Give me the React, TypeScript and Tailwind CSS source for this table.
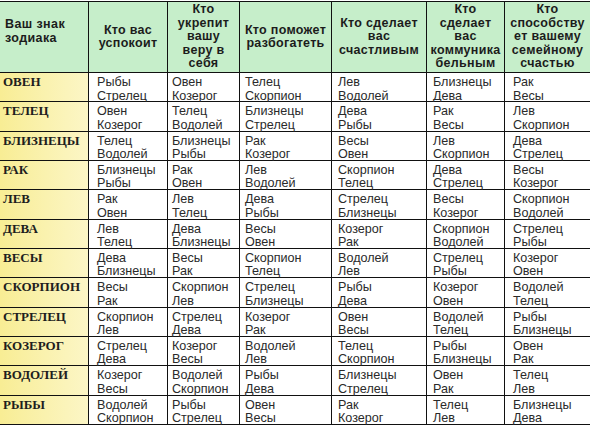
import React from 'react';

type Row = { sign: string; cells: [string, string][] };

const ROWS: Row[] = [
  { sign: 'ОВЕН', cells: [['Рыбы', 'Стрелец'], ['Овен', 'Козерог'], ['Телец', 'Скорпион'], ['Лев', 'Водолей'], ['Близнецы', 'Дева'], ['Рак', 'Весы']] },
  { sign: 'ТЕЛЕЦ', cells: [['Овен', 'Козерог'], ['Телец', 'Водолей'], ['Близнецы', 'Стрелец'], ['Дева', 'Рыбы'], ['Рак', 'Весы'], ['Лев', 'Скорпион']] },
  { sign: 'БЛИЗНЕЦЫ', cells: [['Телец', 'Водолей'], ['Близнецы', 'Рыбы'], ['Рак', 'Козерог'], ['Весы', 'Овен'], ['Лев', 'Скорпион'], ['Дева', 'Стрелец']] },
  { sign: 'РАК', cells: [['Близнецы', 'Рыбы'], ['Рак', 'Овен'], ['Лев', 'Водолей'], ['Скорпион', 'Телец'], ['Дева', 'Стрелец'], ['Весы', 'Козерог']] },
  { sign: 'ЛЕВ', cells: [['Рак', 'Овен'], ['Лев', 'Телец'], ['Дева', 'Рыбы'], ['Стрелец', 'Близнецы'], ['Весы', 'Козерог'], ['Скорпион', 'Водолей']] },
  { sign: 'ДЕВА', cells: [['Лев', 'Телец'], ['Дева', 'Близнецы'], ['Весы', 'Овен'], ['Козерог', 'Рак'], ['Скорпион', 'Водолей'], ['Стрелец', 'Рыбы']] },
  { sign: 'ВЕСЫ', cells: [['Дева', 'Близнецы'], ['Весы', 'Рак'], ['Скорпион', 'Телец'], ['Водолей', 'Лев'], ['Стрелец', 'Рыбы'], ['Козерог', 'Овен']] },
  { sign: 'СКОРПИОН', cells: [['Весы', 'Рак'], ['Скорпион', 'Лев'], ['Стрелец', 'Близнецы'], ['Рыбы', 'Дева'], ['Козерог', 'Овен'], ['Водолей', 'Телец']] },
  { sign: 'СТРЕЛЕЦ', cells: [['Скорпион', 'Лев'], ['Стрелец', 'Дева'], ['Козерог', 'Рак'], ['Овен', 'Весы'], ['Водолей', 'Телец'], ['Рыбы', 'Близнецы']] },
  { sign: 'КОЗЕРОГ', cells: [['Стрелец', 'Дева'], ['Козерог', 'Весы'], ['Водолей', 'Лев'], ['Телец', 'Скорпион'], ['Рыбы', 'Близнецы'], ['Овен', 'Рак']] },
  { sign: 'ВОДОЛЕЙ', cells: [['Козерог', 'Весы'], ['Водолей', 'Скорпион'], ['Рыбы', 'Дева'], ['Близнецы', 'Стрелец'], ['Овен', 'Рак'], ['Телец', 'Лев']] },
  { sign: 'РЫБЫ', cells: [['Водолей', 'Скорпион'], ['Рыбы', 'Стрелец'], ['Овен', 'Весы'], ['Рак', 'Козерог'], ['Телец', 'Лев'], ['Близнецы', 'Дева']] },
];

const HEADERS: string[][] = [
  ['Кто вас', 'успокоит'],
  ['Кто', 'укрепит', 'вашу', 'веру в', 'себя'],
  ['Кто поможет', 'разбогатеть'],
  ['Кто сделает', 'вас', 'счастливым'],
  ['Кто', 'сделает', 'вас', 'коммуника', 'бельным'],
  ['Кто', 'способству', 'ет вашему', 'семейному', 'счастью'],
];

const PAD = ['pl-[8px]', 'pl-[4px]', 'pl-[5px]', 'pl-[6px]', 'pl-[6px]', 'pl-[8px]'];

export default function App() {
  return (
    <div className="w-[590px] h-[427px] bg-white overflow-hidden pt-px">
      <div className="grid grid-cols-[89px_79px_72px_92px_95px_78px_85px] grid-rows-[71px_repeat(12,29.33px)] border-t border-[#111] font-['Liberation_Sans',Arial,sans-serif]">
        <div className="bg-[#c6eeca] border-r border-b border-[#111] flex items-center pl-[5px] pb-[12px] text-[12.5px] leading-[14px] font-bold tracking-[0.4px] text-[#1c1c1c]">
          Ваш знак<br />зодиака
        </div>
        {HEADERS.map((lines, i) => (
          <div
            key={i}
            className={`bg-[#c6eeca] border-b border-[#111] flex flex-col items-center justify-center text-center text-[12.5px] leading-[13.5px] font-bold tracking-[0.3px] text-[#1c1c1c] whitespace-nowrap ${i < 5 ? 'border-r' : ''}`}
          >
            {lines.map((l, j) => (
              <span key={j}>{l}</span>
            ))}
          </div>
        ))}
        {ROWS.map((row) => (
          <React.Fragment key={row.sign}>
            <div className="bg-gradient-to-r from-[#f8ed94] to-[#fcf6c6] border-r border-b border-[#111] pl-[3px] pt-[2px] text-[13px] leading-[14px] font-bold text-[#1e1e1e] font-['Liberation_Serif','Times_New_Roman',serif]">
              {row.sign}
            </div>
            {row.cells.map((c, i) => (
              <div
                key={i}
                className={`bg-white border-b border-[#111] pt-[3px] ${PAD[i]} text-[12.6px] leading-[13.5px] text-[#2a2a2a] ${i < 5 ? 'border-r' : ''}`}
              >
                <div>{c[0]}</div>
                <div>{c[1]}</div>
              </div>
            ))}
          </React.Fragment>
        ))}
      </div>
    </div>
  );
}
